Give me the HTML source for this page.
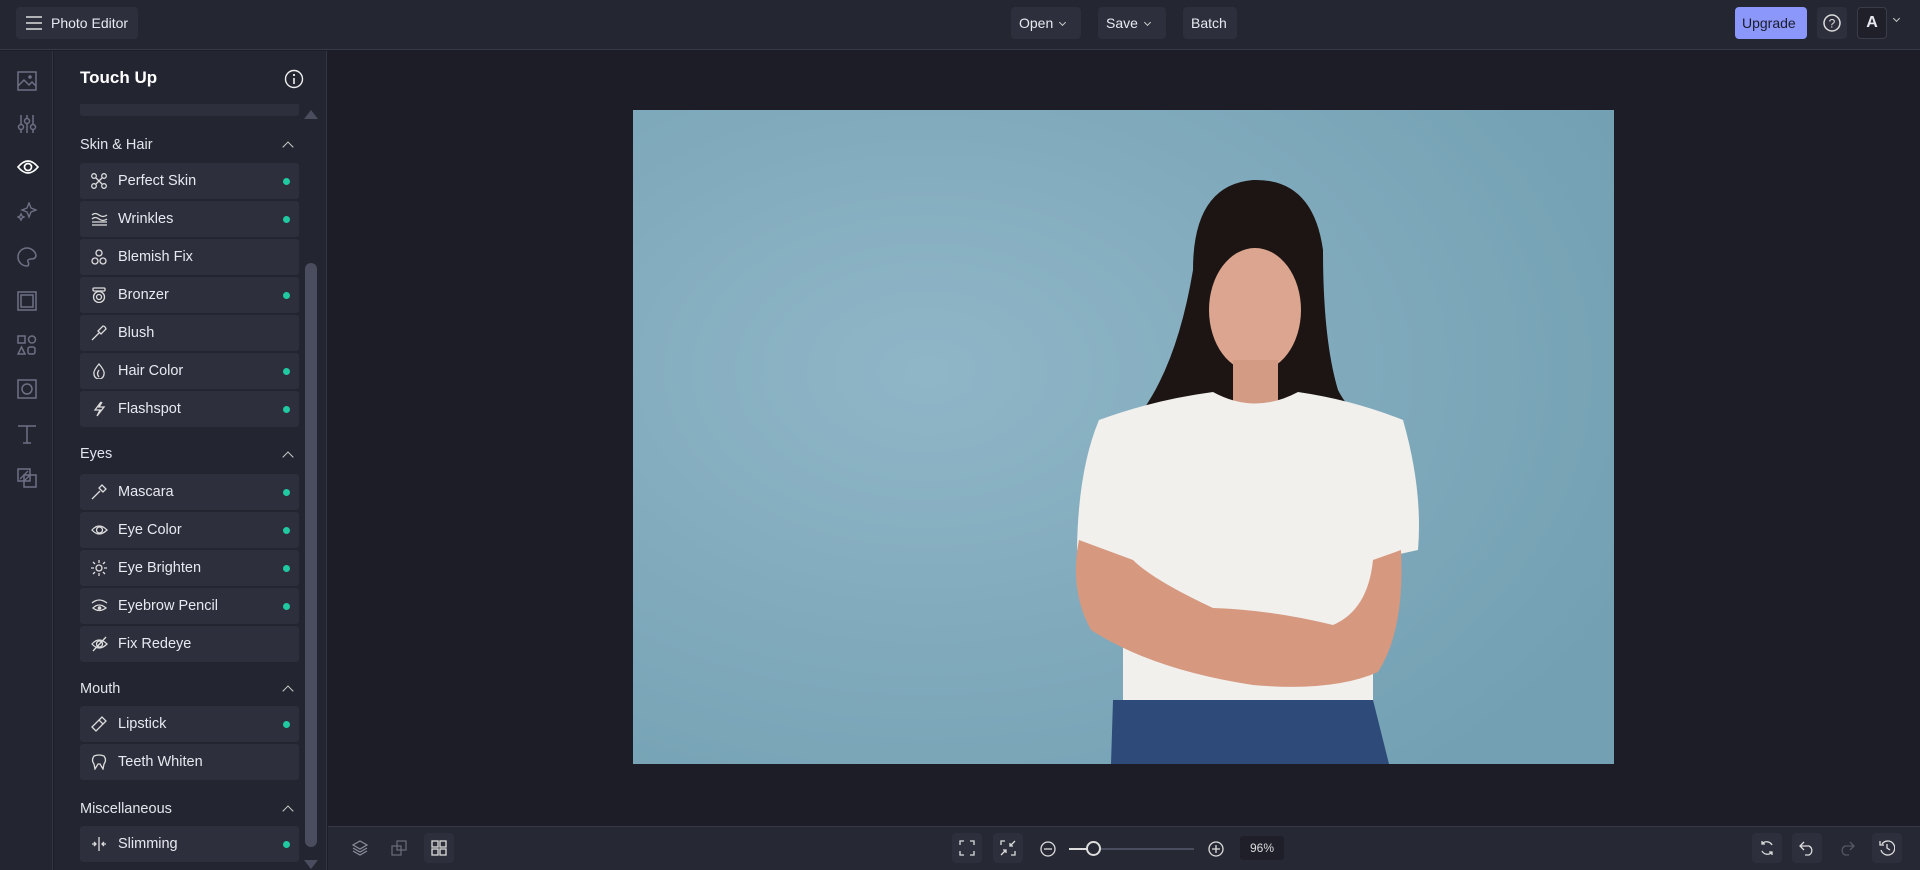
<!DOCTYPE html>
<html><head><meta charset="utf-8"><style>
*{box-sizing:border-box;margin:0;padding:0}
body{width:1920px;height:870px;overflow:hidden;background:#1c1d27;font-family:"Liberation Sans",sans-serif;color:#e6e7ee;position:relative}
.top{position:absolute;left:0;top:0;width:1920px;height:50px;background:#242632;border-bottom:1px solid #383a47}
.btn{position:absolute;top:7px;height:32px;background:#2d2f3c;border-radius:4px;font-size:14px;line-height:32px;color:#e8e9f0;padding:0 8px;white-space:nowrap;overflow:hidden}
.rail{position:absolute;left:0;top:51px;width:53px;height:819px;background:#232530;border-right:1px solid #333542}
.panel{position:absolute;left:54px;top:51px;width:273px;height:819px;background:#232530;border-right:1px solid #333542}
.sec{position:absolute;left:80px;font-size:14.5px;color:#e4e5ec}
.chev{position:absolute;left:284px;width:8px;height:8px;border-left:1.5px solid #ccc;border-top:1.5px solid #ccc;transform:rotate(45deg)}
.item{position:absolute;left:80px;width:219px;height:36px;background:#2d2f3c;border-radius:3px;font-size:14.5px;line-height:36px;padding-left:38px;color:#e8e9f0;white-space:nowrap}
.item svg{position:absolute;left:11px;top:10px}
.dot{position:absolute;right:9px;top:15px;width:7px;height:7px;border-radius:50%;background:#20c9a2}
.ri{position:absolute;left:17px}
.bottom{position:absolute;left:328px;top:826px;width:1592px;height:44px;background:#262833;border-top:1px solid #363846}
.bb{position:absolute;top:6px;width:30px;height:30px;background:#2d2f3c;border-radius:4px}
.bb svg{position:absolute;left:7px;top:7px}
.cv{display:inline-block;width:5px;height:5px;border-right:1.3px solid #ccc;border-bottom:1.3px solid #ccc;transform:rotate(45deg);margin-left:7px;vertical-align:3px}
</style></head><body>
<div class="top">
 <div class="btn" style="left:16px;width:122px;padding-left:35px">Photo Editor
  <svg style="position:absolute;left:10px;top:9px" width="16" height="14"><path d="M0 1H16M0 7H16M0 13H16" stroke="#ddd" stroke-width="1.6"/></svg></div>
 <div class="btn" style="left:1011px;width:70px">Open<span class="cv"></span></div>
 <div class="btn" style="left:1098px;width:68px">Save<span class="cv"></span></div>
 <div class="btn" style="left:1183px;width:54px">Batch</div>
 <div class="btn" style="left:1735px;width:72px;background:#8b97fb;color:#1a1c2a;padding:0 7px">Upgrade</div>
 <div class="btn" style="left:1817px;width:30px;padding:0"><svg style="position:absolute;left:6px;top:7px" width="18" height="18"><circle cx="9" cy="9" r="8" fill="none" stroke="#ddd" stroke-width="1.5"/><text x="9" y="13.5" font-size="12" text-anchor="middle" fill="#ddd" font-family="Liberation Sans">?</text></svg></div>
 <div class="btn" style="left:1857px;width:30px;padding:0;background:#1f2029;border:1px solid #3a3c48;text-align:center;font-weight:bold;font-size:16px;line-height:30px">A</div>
 <div style="position:absolute;left:1894px;top:16px;width:5px;height:5px;border-right:1.3px solid #ccc;border-bottom:1.3px solid #ccc;transform:rotate(45deg)"></div>
</div>
<div class="rail">
 <svg class="ri" style="top:20px" width="20" height="20"><rect x="1" y="1" width="18" height="18" fill="none" stroke="#6e7185" stroke-width="1.5"/><path d="M1 15L7 9L12 14L15 11L19 15" fill="none" stroke="#6e7185" stroke-width="1.5"/><circle cx="13" cy="6" r="1.8" fill="#6e7185"/></svg>
 <svg class="ri" style="top:63px" width="20" height="20"><path d="M4 1V19M10 1V19M16 1V19" stroke="#6e7185" stroke-width="1.5"/><circle cx="4" cy="13" r="2.5" fill="#232530" stroke="#6e7185" stroke-width="1.5"/><circle cx="10" cy="7" r="2.5" fill="#232530" stroke="#6e7185" stroke-width="1.5"/><circle cx="16" cy="13" r="2.5" fill="#232530" stroke="#6e7185" stroke-width="1.5"/></svg>
 <svg class="ri" style="top:108px" width="22" height="16"><path d="M1 8Q11 -4 21 8Q11 20 1 8Z" fill="none" stroke="#fff" stroke-width="1.7"/><circle cx="11" cy="8" r="3.5" fill="none" stroke="#fff" stroke-width="1.7"/></svg>
 <svg class="ri" style="top:151px" width="20" height="20"><path d="M12 1L14 6L19 8L14 10L12 15L10 10L5 8L10 6Z M4 12L5 14L7 15L5 16L4 18L3 16L1 15L3 14Z" fill="none" stroke="#6e7185" stroke-width="1.4"/></svg>
 <svg class="ri" style="top:196px" width="20" height="20"><path d="M10 1A9 9 0 1 0 10 19C12 19 12 16 11 15C10 13 12 12 14 12C18 12 19 10 19 8C18 4 14 1 10 1Z" fill="none" stroke="#6e7185" stroke-width="1.5"/></svg>
 <svg class="ri" style="top:240px" width="20" height="20"><rect x="1" y="1" width="18" height="18" fill="none" stroke="#6e7185" stroke-width="1.5"/><rect x="4" y="4" width="12" height="12" fill="none" stroke="#6e7185" stroke-width="1.5"/></svg>
 <svg class="ri" style="top:284px" width="20" height="20"><rect x="1" y="1" width="7" height="7" fill="none" stroke="#6e7185" stroke-width="1.5"/><circle cx="15" cy="4.5" r="3.5" fill="none" stroke="#6e7185" stroke-width="1.5"/><path d="M4.5 12L8 19H1Z" fill="none" stroke="#6e7185" stroke-width="1.5"/><rect x="11" y="12" width="7" height="7" rx="2" fill="none" stroke="#6e7185" stroke-width="1.5"/></svg>
 <svg class="ri" style="top:328px" width="20" height="20"><rect x="1" y="1" width="18" height="18" fill="none" stroke="#6e7185" stroke-width="1.5"/><circle cx="10" cy="10" r="5" fill="none" stroke="#6e7185" stroke-width="1.5"/></svg>
 <svg class="ri" style="top:373px" width="20" height="20"><path d="M1 2H19M10 2V19M6 19H14" stroke="#6e7185" stroke-width="1.5"/></svg>
 <svg class="ri" style="top:417px" width="20" height="20"><rect x="1" y="1" width="12" height="12" fill="none" stroke="#6e7185" stroke-width="1.5"/><rect x="7" y="7" width="12" height="12" fill="none" stroke="#6e7185" stroke-width="1.5"/><path d="M3 11L11 3M7 13L13 7" stroke="#6e7185" stroke-width="1.3"/></svg>
</div>
<div class="panel"></div>
<div style="position:absolute;left:80px;top:68px;font-size:17px;font-weight:bold;color:#fff">Touch Up</div>
<svg style="position:absolute;left:284px;top:69px" width="20" height="20"><circle cx="10" cy="10" r="8.5" fill="none" stroke="#eee" stroke-width="1.4"/><path d="M10 9V15" stroke="#eee" stroke-width="1.6"/><circle cx="10" cy="6" r="1.1" fill="#eee"/></svg>
<div style="position:absolute;left:80px;top:104px;width:219px;height:12px;background:#2d2f3c;border-radius:0 0 3px 3px"></div>
<div style="position:absolute;left:304px;top:110px;width:0;height:0;border-left:7px solid transparent;border-right:7px solid transparent;border-bottom:9px solid #4a4d5e"></div>
<div style="position:absolute;left:305px;top:263px;width:12px;height:584px;background:#4a4d5e;border-radius:6px"></div>
<div style="position:absolute;left:304px;top:860px;width:0;height:0;border-left:7px solid transparent;border-right:7px solid transparent;border-top:9px solid #4a4d5e"></div>

<div class="sec" style="top:137px">Skin &amp; Hair</div><div class="chev" style="top:143px"></div>
<div class="item" style="top:163px"><svg width="16" height="16"><circle cx="3" cy="3" r="2.3" fill="none" stroke="#ddd" stroke-width="1.3"/><circle cx="13" cy="3" r="2.3" fill="none" stroke="#ddd" stroke-width="1.3"/><circle cx="3" cy="13" r="2.3" fill="none" stroke="#ddd" stroke-width="1.3"/><circle cx="13" cy="13" r="2.3" fill="none" stroke="#ddd" stroke-width="1.3"/><path d="M5 5L11 11M11 5L5 11" stroke="#ddd" stroke-width="1.3"/></svg>Perfect Skin<div class="dot"></div></div>
<div class="item" style="top:201px"><svg width="17" height="16"><path d="M1 4Q4 1 8 4T16 4M1 8Q4 5 8 8T16 8M1 11H16M1 14H16" fill="none" stroke="#ddd" stroke-width="1.3"/></svg>Wrinkles<div class="dot"></div></div>
<div class="item" style="top:239px"><svg width="16" height="16"><circle cx="8" cy="4" r="3" fill="none" stroke="#ddd" stroke-width="1.3"/><circle cx="4" cy="12" r="3" fill="none" stroke="#ddd" stroke-width="1.3"/><circle cx="12" cy="12" r="3" fill="none" stroke="#ddd" stroke-width="1.3"/></svg>Blemish Fix</div>
<div class="item" style="top:277px"><svg width="16" height="16"><rect x="2" y="1" width="12" height="3" rx="1" fill="none" stroke="#ddd" stroke-width="1.3"/><circle cx="8" cy="10" r="5.5" fill="none" stroke="#ddd" stroke-width="1.3"/><circle cx="8" cy="10" r="2.5" fill="none" stroke="#ddd" stroke-width="1.3"/></svg>Bronzer<div class="dot"></div></div>
<div class="item" style="top:315px"><svg width="16" height="16"><path d="M1 15L8 8M7 6L10 9L15 4Q14 1 12 1Z" fill="none" stroke="#ddd" stroke-width="1.3"/></svg>Blush</div>
<div class="item" style="top:353px"><svg width="16" height="16"><path d="M8 1Q14 8 13 11A5 5 0 0 1 3 11Q2 8 8 1Z M8 7Q5 11 8 14" fill="none" stroke="#ddd" stroke-width="1.3"/></svg>Hair Color<div class="dot"></div></div>
<div class="item" style="top:391px"><svg width="16" height="16"><path d="M10 1L4 9H9L6 15L13 6H8L11 1" fill="none" stroke="#ddd" stroke-width="1.3"/></svg>Flashspot<div class="dot"></div></div>

<div class="sec" style="top:446px">Eyes</div><div class="chev" style="top:453px"></div>
<div class="item" style="top:474px"><svg width="16" height="16"><path d="M1 15L9 7M8 4L12 8M11 1L15 5L12 8L8 4Z" fill="none" stroke="#ddd" stroke-width="1.3"/></svg>Mascara<div class="dot"></div></div>
<div class="item" style="top:512px"><svg width="17" height="16"><path d="M1 8Q8 0 16 8Q8 16 1 8Z" fill="none" stroke="#ddd" stroke-width="1.3"/><circle cx="8.5" cy="8" r="3" fill="none" stroke="#ddd" stroke-width="1.3"/></svg>Eye Color<div class="dot"></div></div>
<div class="item" style="top:550px"><svg width="16" height="16"><circle cx="8" cy="8" r="3" fill="none" stroke="#ddd" stroke-width="1.3"/><path d="M8 0V3M8 13V16M0 8H3M13 8H16M2 2L4 4M12 12L14 14M2 14L4 12M12 4L14 2" stroke="#ddd" stroke-width="1.3"/></svg>Eye Brighten<div class="dot"></div></div>
<div class="item" style="top:588px"><svg width="17" height="16"><path d="M1 5Q8 -1 16 5M2 10Q8 4 15 10Q8 15 2 10Z" fill="none" stroke="#ddd" stroke-width="1.3"/><circle cx="8.5" cy="10" r="1.8" fill="#ddd"/></svg>Eyebrow Pencil<div class="dot"></div></div>
<div class="item" style="top:626px"><svg width="17" height="16"><path d="M1 8Q8 0 16 8Q8 16 1 8Z M2 15L15 1" fill="none" stroke="#ddd" stroke-width="1.3"/><circle cx="8.5" cy="8" r="3" fill="none" stroke="#ddd" stroke-width="1.3"/></svg>Fix Redeye</div>

<div class="sec" style="top:681px">Mouth</div><div class="chev" style="top:687px"></div>
<div class="item" style="top:706px"><svg width="16" height="16"><path d="M1 11L5 15L12 8L8 4Z M8 4L11 1L15 5L12 8" fill="none" stroke="#ddd" stroke-width="1.3"/></svg>Lipstick<div class="dot"></div></div>
<div class="item" style="top:744px"><svg width="16" height="16"><path d="M3 2Q8 0 13 2Q16 6 13 10L12 15L9 10H7L4 15L3 10Q0 6 3 2Z" fill="none" stroke="#ddd" stroke-width="1.3"/></svg>Teeth Whiten</div>

<div class="sec" style="top:801px">Miscellaneous</div><div class="chev" style="top:807px"></div>
<div class="item" style="top:826px"><svg width="16" height="16"><path d="M8 1V15M1 8H5M11 8H15M3 6L5 8L3 10M13 6L11 8L13 10" fill="none" stroke="#ddd" stroke-width="1.3"/></svg>Slimming<div class="dot"></div></div>

<svg style="position:absolute;left:633px;top:110px" width="981" height="654" viewBox="0 0 981 654">
 <defs><radialGradient id="bg" cx="0.3" cy="0.4" r="0.8"><stop offset="0" stop-color="#8fb6c7"/><stop offset="1" stop-color="#73a0b3"/></radialGradient></defs>
 <rect width="981" height="654" fill="url(#bg)"/>
 <path d="M560 160Q560 75 620 70Q680 68 690 140Q690 230 705 280Q720 310 760 325L700 330L600 320Q530 330 510 300Q545 250 560 160Z" fill="#1d1513"/>
 <ellipse cx="622" cy="200" rx="46" ry="62" fill="#dca58f"/>
 <path d="M600 250H645V300H600Z" fill="#d39b84"/>
 <path d="M466 310Q520 290 580 282Q622 305 665 282Q720 290 770 310Q790 380 785 440L740 450V620H490V450L444 440Q445 360 466 310Z" fill="#f1f0ec"/>
 <path d="M446 430Q436 480 458 520Q520 560 620 575Q700 582 745 562Q772 520 768 440L740 450Q735 500 700 515Q640 500 580 498Q520 470 500 450Z" fill="#d6987f"/>
 <path d="M480 590L740 590L756 654H478Z" fill="#2e4a78"/>
</svg>

<div class="bottom">
 <div class="bb" style="left:17px;background:transparent"><svg width="16" height="16"><path d="M8 1L15 5L8 9L1 5Z M1 8L8 12L15 8M1 11L8 15L15 11" fill="none" stroke="#8a8d9c" stroke-width="1.2"/></svg></div>
 <div class="bb" style="left:56px;background:transparent"><svg width="16" height="16"><rect x="1" y="6" width="9" height="9" fill="none" stroke="#6a6d7c" stroke-width="1.2"/><rect x="6" y="1" width="9" height="9" fill="none" stroke="#6a6d7c" stroke-width="1.2"/></svg></div>
 <div class="bb" style="left:96px"><svg width="16" height="16"><rect x="1" y="1" width="6" height="6" fill="none" stroke="#ddd" stroke-width="1.3"/><rect x="9" y="1" width="6" height="6" fill="none" stroke="#ddd" stroke-width="1.3"/><rect x="1" y="9" width="6" height="6" fill="none" stroke="#ddd" stroke-width="1.3"/><rect x="9" y="9" width="6" height="6" fill="none" stroke="#ddd" stroke-width="1.3"/></svg></div>
 <div class="bb" style="left:624px"><svg width="16" height="16"><path d="M1 5V1H5M11 1H15V5M15 11V15H11M5 15H1V11" fill="none" stroke="#ddd" stroke-width="1.3"/></svg></div>
 <div class="bb" style="left:665px"><svg width="16" height="16"><path d="M1 5V1H5M11 15H15V11M15 1L10 6M10 3V6H13M1 15L6 10M3 10H6V13" fill="none" stroke="#ddd" stroke-width="1.3"/></svg></div>
 <svg style="position:absolute;left:712px;top:14px" width="16" height="16"><circle cx="8" cy="8" r="7" fill="none" stroke="#ddd" stroke-width="1.3"/><path d="M4 8H12" stroke="#ddd" stroke-width="1.3"/></svg>
 <div style="position:absolute;left:741px;top:21px;width:125px;height:2px;background:#4a4d5e"></div>
 <div style="position:absolute;left:741px;top:21px;width:24px;height:2px;background:#ddd"></div>
 <div style="position:absolute;left:758px;top:14px;width:15px;height:15px;border-radius:50%;border:2px solid #ddd;background:#262833"></div>
 <svg style="position:absolute;left:880px;top:14px" width="16" height="16"><circle cx="8" cy="8" r="7" fill="none" stroke="#ddd" stroke-width="1.3"/><path d="M4 8H12M8 4V12" stroke="#ddd" stroke-width="1.3"/></svg>
 <div style="position:absolute;left:912px;top:9px;width:44px;height:24px;background:#1e1f29;border-radius:3px;font-size:12px;line-height:24px;text-align:center;color:#ddd">96%</div>
 <div class="bb" style="left:1424px"><svg width="16" height="16"><path d="M13 5A6 6 0 0 0 3 4M3 11A6 6 0 0 0 13 12M3 1V4H6M13 15V12H10" fill="none" stroke="#ddd" stroke-width="1.3"/></svg></div>
 <div class="bb" style="left:1464px"><svg width="16" height="16"><path d="M5 2L1 6L5 10M1 6H10A5 5 0 0 1 10 15H6" fill="none" stroke="#ddd" stroke-width="1.3"/></svg></div>
 <div class="bb" style="left:1504px;background:transparent"><svg width="16" height="16"><path d="M11 2L15 6L11 10M15 6H6A5 5 0 0 0 6 15H10" fill="none" stroke="#555866" stroke-width="1.3"/></svg></div>
 <div class="bb" style="left:1544px"><svg width="16" height="16"><path d="M3 4A7 7 0 1 1 2 10M1 1V5H5M8 4V8L11 10" fill="none" stroke="#ddd" stroke-width="1.3"/></svg></div>
</div>
</body></html>
